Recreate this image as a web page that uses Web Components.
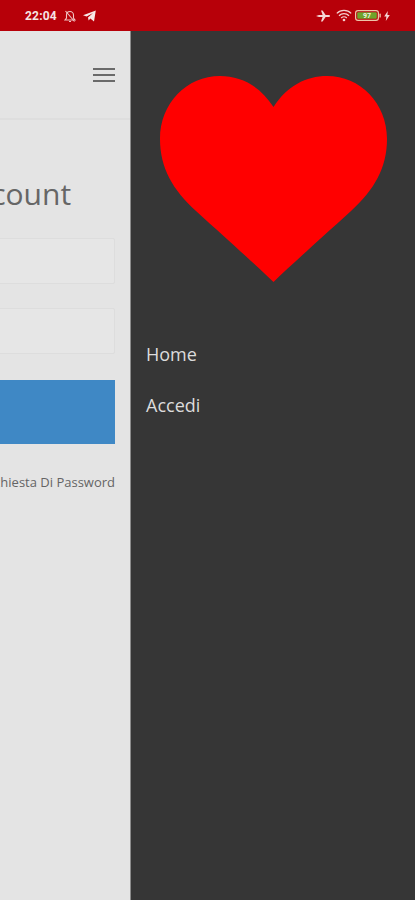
<!DOCTYPE html>
<html lang="it">
<head>
<meta charset="utf-8">
<title>Accedi</title>
<style>
  html, body { margin: 0; height: 100%; background: #363636; }
  body { font-family: "Open Sans", "Noto Sans", sans-serif; overflow: hidden; }
</style>
</head>
<body>

<app-shell>
  <status-bar slot="status"></status-bar>
  <login-page slot="page">
    <span slot="title">Accedi al tuo account</span>
    <span slot="button">Accedi</span>
    <span slot="link">Richiesta Di Password</span>
  </login-page>
  <side-drawer slot="drawer">
    <a href="#home">Home</a>
    <a href="#accedi">Accedi</a>
  </side-drawer>
</app-shell>

<template id="appShell">
  <style>
    :host { display: flex; flex-direction: column; width: 415px; height: 900px; overflow: hidden; }
    .body { display: flex; flex: 1; min-height: 0; overflow: hidden; }
    ::slotted([slot="page"]) { flex: 0 0 415px; margin-left: -284px; }
    ::slotted([slot="drawer"]) { flex: 0 0 284px; }
  </style>
  <slot name="status"></slot>
  <div class="body">
    <slot name="page"></slot>
    <slot name="drawer"></slot>
  </div>
</template>

<template id="statusBar">
  <style>
    :host { display: flex; align-items: center; justify-content: space-between; height: 31px; flex: none; background: #b70009; color: #f6e3e3; padding: 0 25px 0 25px; box-sizing: border-box; font: 700 12px Roboto, sans-serif; }
    .side { display: flex; align-items: center; }
    .time { margin-right: 6px; letter-spacing: .2px; }
    svg { display: block; }
  </style>
  <div class="side">
    <span class="time">22:04</span>
    <!-- muted bell -->
    <svg width="14" height="14" viewBox="0 0 14 14" fill="none" stroke="#f0c4c4" stroke-width="1.1">
      <path d="M2 11h10l-1.5-2V6a3.5 3.5 0 0 0-7 0v3z"/><path d="M6 12.5h2"/><path d="M2.5 2l9 10.5"/>
    </svg>
    <!-- telegram -->
    <svg style="margin-left:6px" width="13" height="12" viewBox="0 0 13 12" fill="#f8e8e8">
      <path d="M0 5.2 12.8.6 11 11.4 7.4 8.6 5.6 10.6 5 7.4 10 3 3.6 6.6z"/>
    </svg>
  </div>
  <div class="side">
    <!-- plane -->
    <svg width="14" height="12" viewBox="0 0 14 12" fill="#f4d6d6">
      <path d="M0 6 3 5 6.6 5 5 .4h1.6L9.6 5H13a1 1 0 0 1 0 2H9.6L6.6 11.6H5L6.6 7H3z"/>
    </svg>
    <!-- wifi -->
    <svg style="margin-left:6px" width="16" height="13" viewBox="0 0 16 13" fill="none" stroke="#f4d0d0" stroke-width="1.3">
      <path d="M.8 4.4a10 10 0 0 1 14.4 0"/><path d="M3 6.8a7 7 0 0 1 10 0"/><path d="M5.2 9a4 4 0 0 1 5.6 0"/>
      <circle cx="8" cy="11" r=".7" fill="#f4d0d0"/>
    </svg>
    <!-- battery -->
    <svg style="margin-left:3px" width="26" height="11" viewBox="0 0 26 11">
      <rect x=".6" y=".6" width="22.8" height="9.8" rx="2.4" fill="none" stroke="#eec4a8" stroke-width="1.2"/>
      <rect x="2.2" y="2.2" width="19.6" height="6.6" rx="1" fill="#6fa32a"/>
      <rect x="24.4" y="3.5" width="1.4" height="4" rx=".6" fill="#eec4a8"/>
      <text x="12" y="8" text-anchor="middle" font-family="Roboto, sans-serif" font-size="7" font-weight="700" fill="#f2f6e0">97</text>
    </svg>
    <!-- charge bolt -->
    <svg style="margin-left:3px" width="6" height="10" viewBox="0 0 6 10" fill="#f4d6d6">
      <path d="M3.8 0 .2 5.6h2.2L1.8 10 5.8 4H3.4z"/>
    </svg>
  </div>
</template>

<template id="loginPage">
  <style>
    :host { display: block; box-sizing: border-box; background: #e4e4e4; color: #5c5c5c; border-right: 1px solid #8c8c8c; }
    header { display: flex; align-items: center; justify-content: flex-end; height: 87px; padding-right: 15px; border-bottom: 2px solid #dedede; }
    .burger { display: flex; flex-direction: column; gap: 4px; width: 22px; }
    .burger i { display: block; height: 2px; background: #6a6a6a; }
    main { padding: 0 15px; }
    h1 { margin: 52px 0 0; height: 44px; font: 400 30px/44px "Open Sans", sans-serif; text-align: center; color: #666; white-space: nowrap; }
    .field { height: 46px; box-sizing: border-box; margin-top: 24px; border: 1px solid #dddddd; background: #e6e6e6; border-radius: 2px; }
    h1 + .field { margin-top: 22px; }
    button { display: block; width: 100%; height: 64px; margin-top: 26px; border: 0; padding: 0; background: #3f88c5; color: #fff; font: 400 16px "Open Sans", sans-serif; }
    .link { margin-top: 29px; text-align: right; font-size: 13px; line-height: 18px; color: #646464; }
  </style>
  <header>
    <div class="burger"><i></i><i></i><i></i></div>
  </header>
  <main>
    <h1><slot name="title"></slot></h1>
    <div class="field"></div>
    <div class="field"></div>
    <button><slot name="button"></slot></button>
    <div class="link"><slot name="link"></slot></div>
  </main>
</template>

<template id="sideDrawer">
  <style>
    :host { display: block; box-sizing: border-box; background: #363636; padding: 45px 28px 0 15px; }
    svg { display: block; margin-left: 14px; }
    nav { display: flex; flex-direction: column; gap: 25px; margin-top: 59px; }
    ::slotted(a) { color: #dcdcdc; text-decoration: none; font: 400 18px/26px "Open Sans", sans-serif; }
  </style>
  <svg width="227" height="206" viewBox="0 0 227 206">
    <path fill="#ff0000" d="M113.5 206 C95 188 70 166 36 135 C13 114 0 92 0 63 C0 27 27 0 60 0 C81 0 100 10 113.5 31 C127 10 146 0 167 0 C200 0 227 27 227 63 C227 92 214 114 191 135 C157 166 132 188 113.5 206Z"/>
  </svg>
  <nav><slot></slot></nav>
</template>

<script>
  (function () {
    'use strict';

    function define(name, templateId) {
      customElements.define(name, class extends HTMLElement {
        constructor() {
          super();
          const shadowRoot = this.attachShadow({ mode: 'open' });
          const temp = document.querySelector('#' + templateId);
          shadowRoot.appendChild(document.importNode(temp.content, true));
        }
      });
    }

    define('app-shell', 'appShell');
    define('status-bar', 'statusBar');
    define('login-page', 'loginPage');
    define('side-drawer', 'sideDrawer');
  })();
</script>
</body>
</html>
